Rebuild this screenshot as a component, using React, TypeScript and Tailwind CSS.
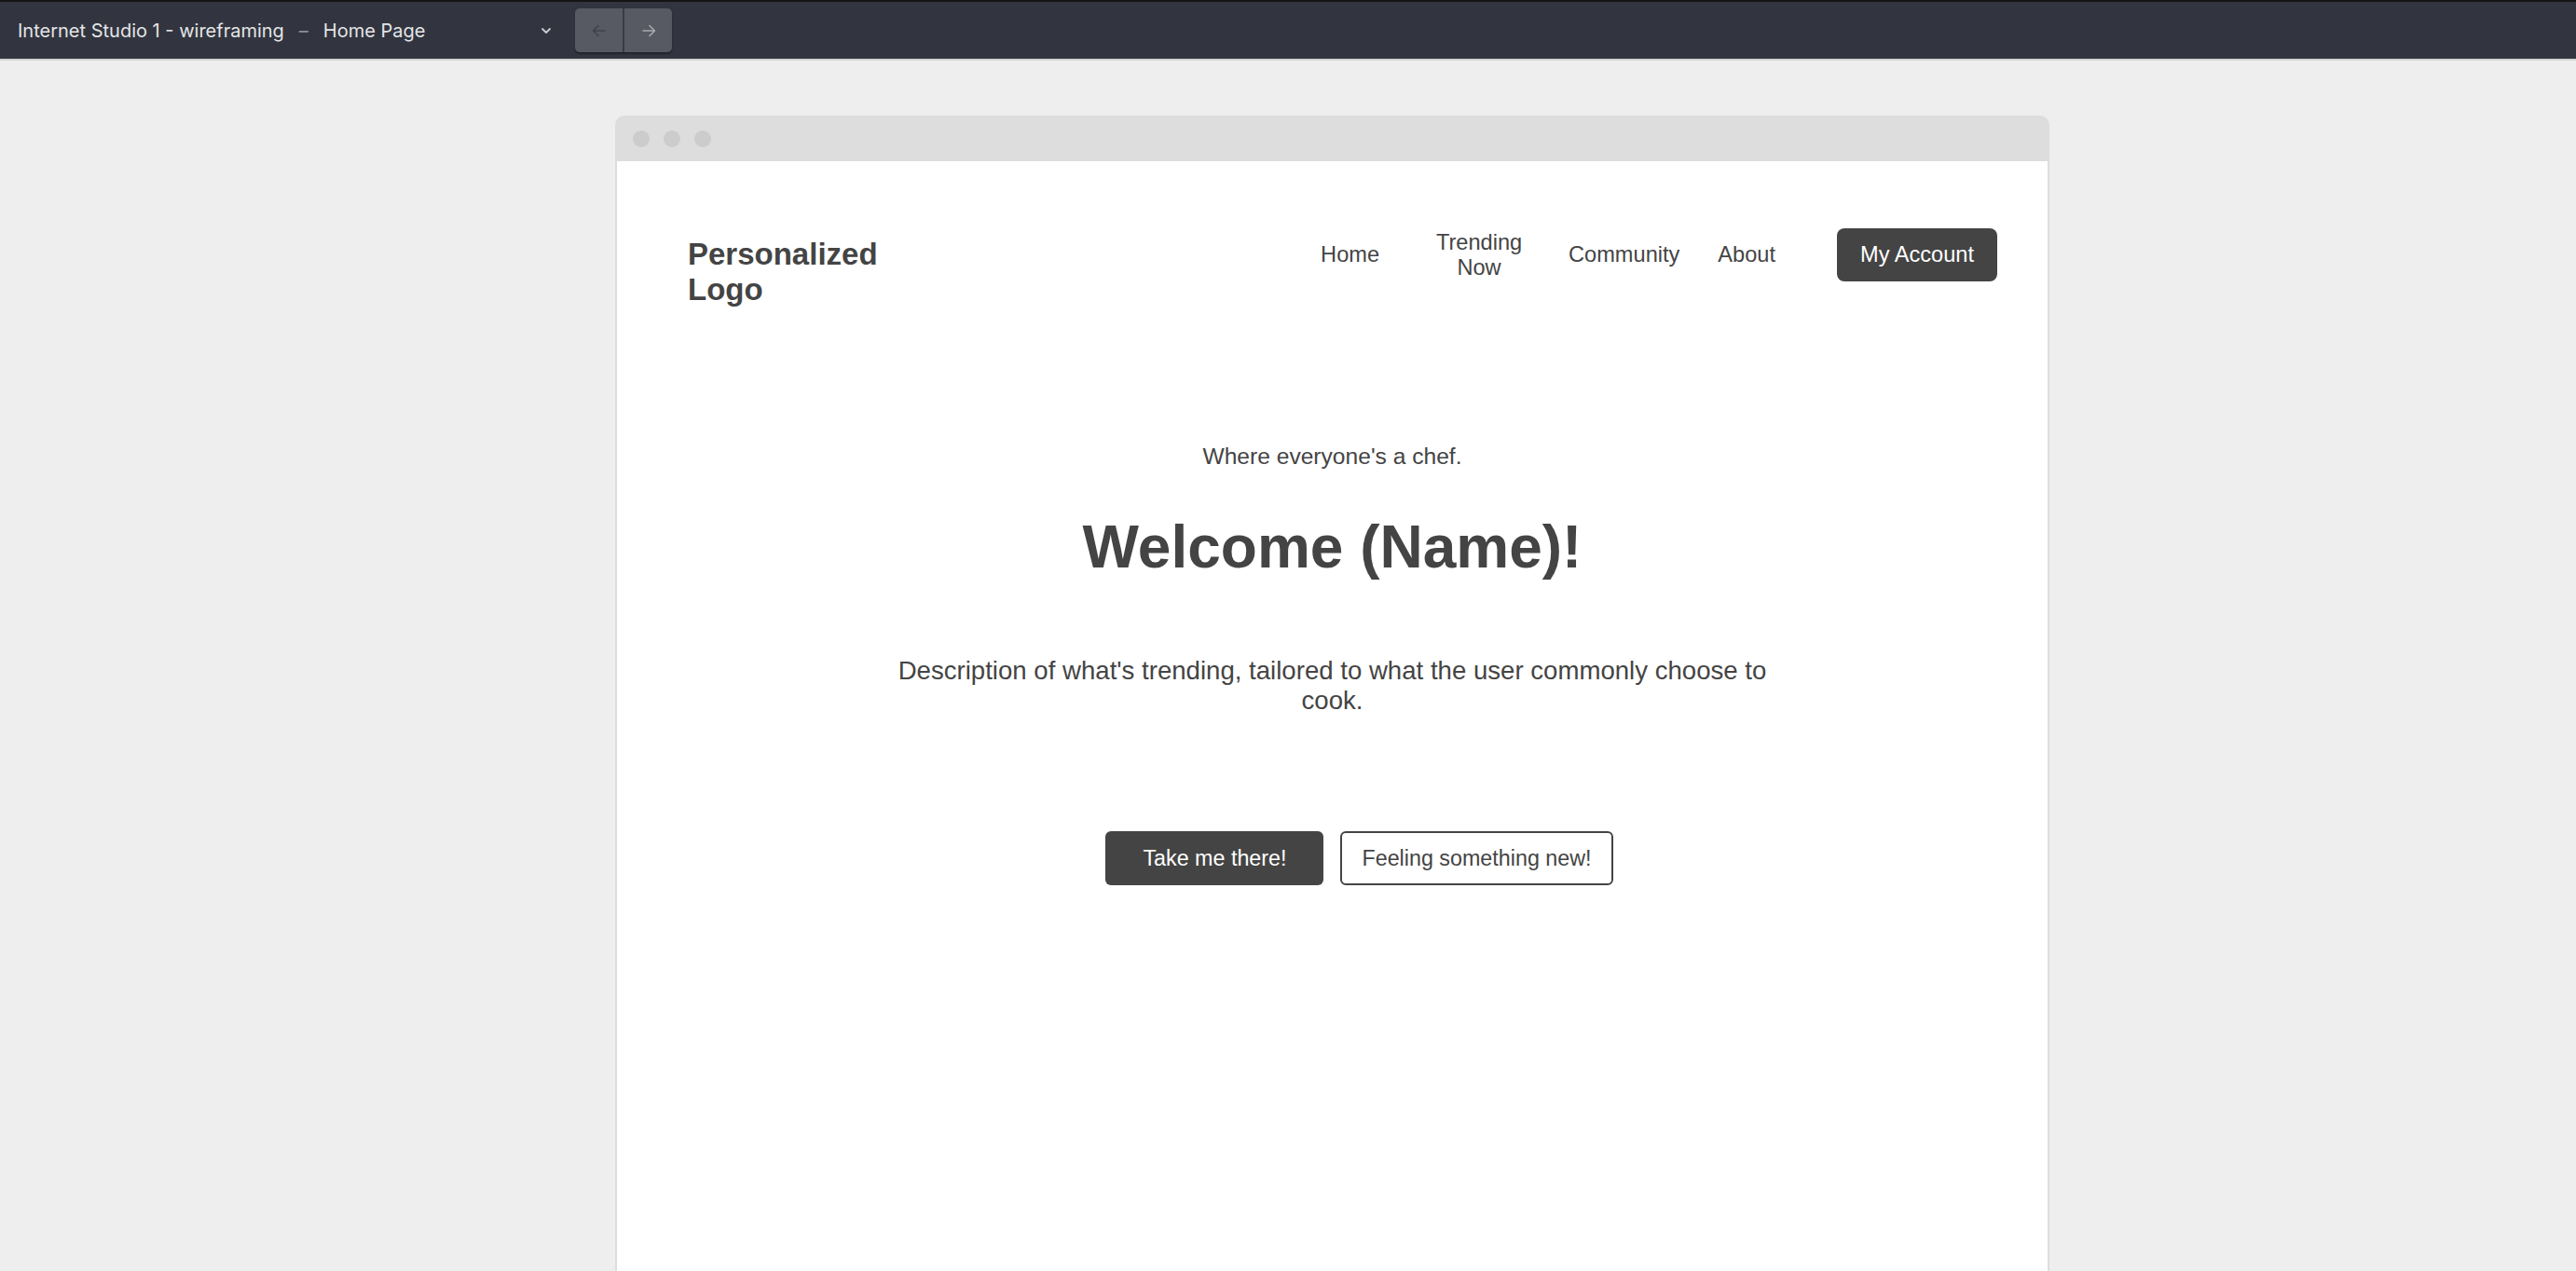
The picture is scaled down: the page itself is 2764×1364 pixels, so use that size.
import React from "react";

function Chevron() {
  return (
    <svg width="12" height="8" viewBox="0 0 12 8" fill="none">
      <path d="M2 2l4 4 4-4" stroke="#c9cbd0" strokeWidth="1.8" strokeLinecap="round" strokeLinejoin="round" />
    </svg>
  );
}

function Arrow({ dir, color }: { dir: "left" | "right"; color: string }) {
  return (
    <svg width="20" height="20" viewBox="0 0 20 20" fill="none">
      {dir === "left" ? (
        <path d="M16 10H4M9 4.5L3.5 10 9 15.5" stroke={color} strokeWidth="1.6" strokeLinecap="round" strokeLinejoin="round" />
      ) : (
        <path d="M4 10h12M11 4.5l5.5 5.5-5.5 5.5" stroke={color} strokeWidth="1.6" strokeLinecap="round" strokeLinejoin="round" />
      )}
    </svg>
  );
}

export default function App() {
  return (
    <div className="h-screen w-full overflow-hidden bg-[#eeeeee]" style={{ fontFamily: '"Liberation Sans", Arial, sans-serif' }}>
      {/* Top toolbar */}
      <div className="h-[63px] bg-[#32353f] border-t-2 border-[#141414] shadow-[0_2px_0_#d2d2d2] flex items-center" style={{ fontFamily: 'Inter, "Noto Sans", sans-serif' }}>
        <div className="pl-[19px] flex items-center text-[20px] text-[#e4e5e8] w-[578px]">
          <span>Internet Studio 1 - wireframing</span>
          <span className="ml-[16px] text-[#8e9098]">–</span>
          <span className="ml-[16px]">Home Page</span>
        </div>
        <div className="w-[16px] flex items-center justify-center">
          <Chevron />
        </div>
        <div className="ml-[23px] flex h-[47px] rounded-[5px] overflow-hidden shadow-[0_2px_2px_rgba(0,0,0,0.35)]">
          <div className="w-[51px] h-full bg-[#575a63] flex items-center justify-center">
            <Arrow dir="left" color="#40434b" />
          </div>
          <div className="w-[2px] h-full bg-[#383b43]" />
          <div className="w-[51px] h-full bg-[#575a63] flex items-center justify-center">
            <Arrow dir="right" color="#a7a9af" />
          </div>
        </div>
      </div>

      {/* Browser frame */}
      <div className="ml-[660px] mt-[61px] w-[1539px] h-[1300px] rounded-t-[10px] bg-[#dddddd] px-[2px] flex flex-col">
        <div className="h-[49px] flex items-center pl-[17px] gap-[15px] shrink-0">
          <span className="w-[18px] h-[18px] rounded-full bg-[#cccccc]" />
          <span className="w-[18px] h-[18px] rounded-full bg-[#cccccc]" />
          <span className="w-[18px] h-[18px] rounded-full bg-[#cccccc]" />
        </div>
        <div className="flex-1 bg-white text-[#444444]">
          {/* Header */}
          <header className="flex justify-between items-start pt-[72px] pl-[76px] pr-[54px]">
            <div className="mt-[9px] w-[240px] text-[33px] leading-[38px] font-bold">Personalized Logo</div>
            <nav className="flex items-center text-[23.6px] leading-[27px]">
              <a className="block">Home</a>
              <a className="block ml-[57px] w-[100px] text-center">Trending Now</a>
              <a className="block ml-[46px]">Community</a>
              <a className="block ml-[41px]">About</a>
              <a className="ml-[66px] h-[57px] px-[25px] rounded-[8px] bg-[#444444] text-white flex items-center">My Account</a>
            </nav>
          </header>

          {/* Hero */}
          <section className="flex flex-col items-center text-center">
            <p className="mt-[146px] text-[24.6px] leading-[28px]">Where everyone's a chef.</p>
            <h1 className="mt-[47px] text-[64px] leading-[72px] font-bold">Welcome (Name)!</h1>
            <p className="mt-[81px] w-[960px] text-[27.6px] leading-[32px]">
              Description of what's trending, tailored to what the user commonly choose to cook.
            </p>
            <div className="mt-[124px] pl-[58px] flex gap-[18px] text-[23.3px] leading-[27px]">
              <button className="w-[234px] h-[58px] rounded-[6px] bg-[#444444] text-white flex items-center justify-center">
                Take me there!
              </button>
              <button className="h-[58px] px-[21px] rounded-[6px] border-2 border-[#444444] bg-white text-[#444444] flex items-center justify-center">
                Feeling something new!
              </button>
            </div>
          </section>
        </div>
      </div>
    </div>
  );
}
